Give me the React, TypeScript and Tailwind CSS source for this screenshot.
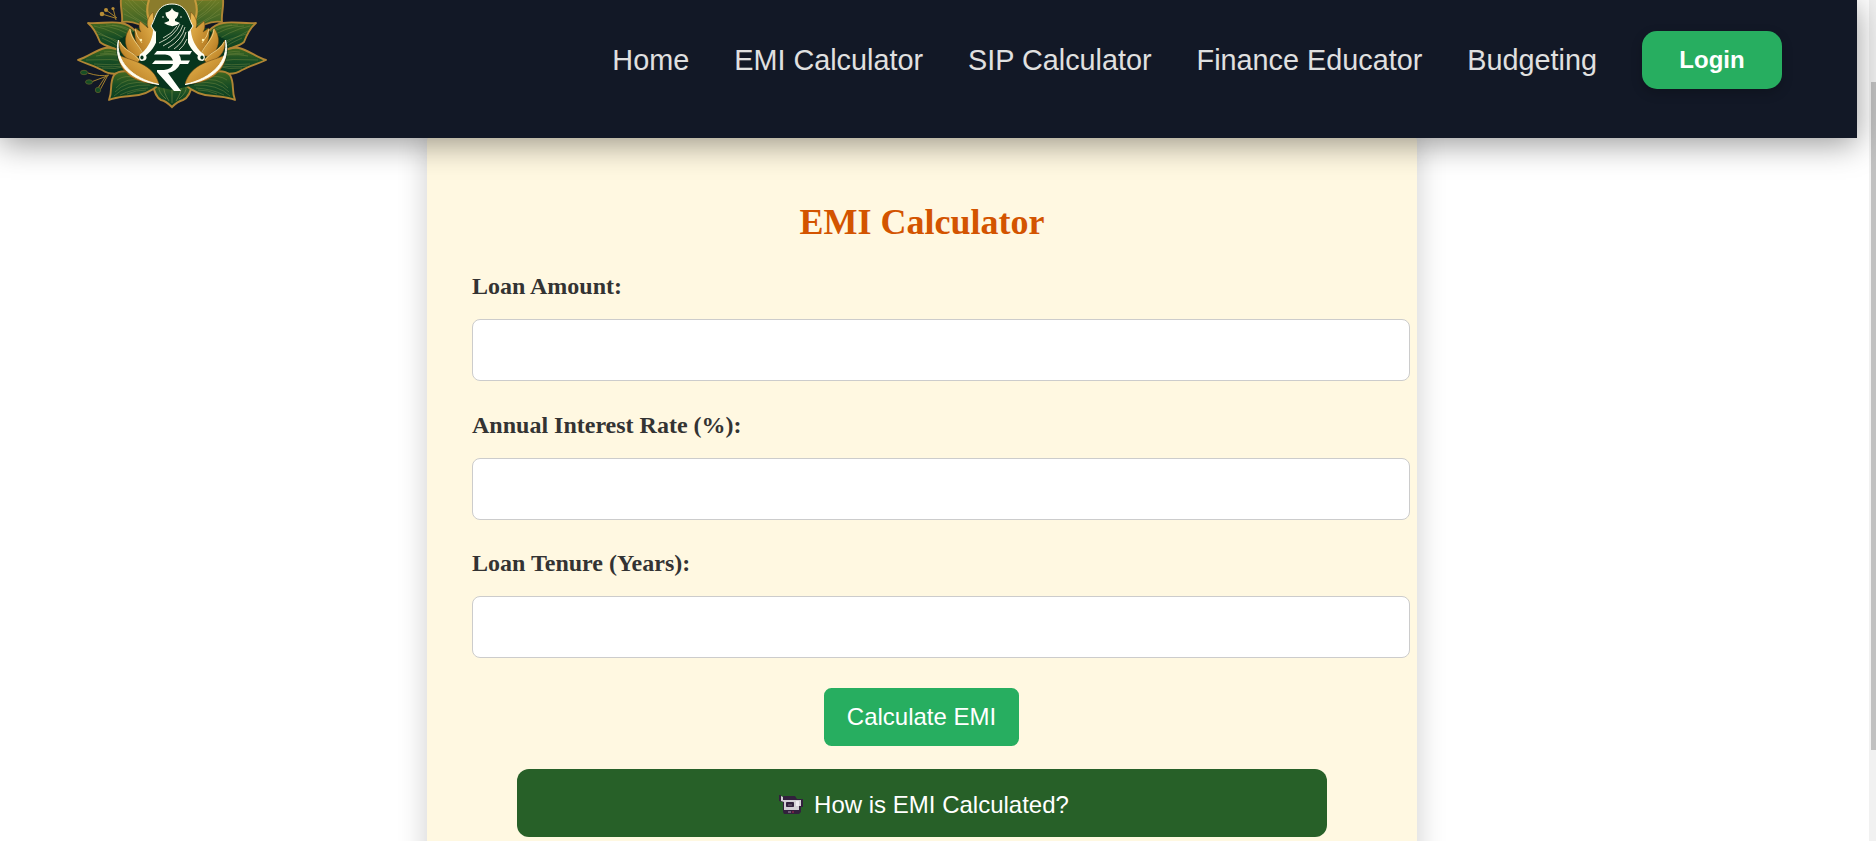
const NAV = ["Home", "EMI Calculator", "SIP Calculator", "Finance Educator", "Budgeting"];
const FIELDS = ["Loan Amount:", "Annual Interest Rate (%):", "Loan Tenure (Years):"];

// Right-hand leaves; the left side mirrors them around x = 112.
const SIDE_LEAVES = [
  { d: "M163 -1C164 7 161 14 162 22C150 20 139 26 132 34L116 0Z", v: "M159 2Q147 14 131 24M152 0Q143 10 129 18M161 8Q151 18 135 26M143 0Q137 8 125 14M156 0Q146 14 130 21M160 14Q150 18 138 26" },
  { d: "M196 23C184 24 174 21 163 23C152 25 144 34 141 46L161 52C172 47 180 46 184 42C187 34 190 28 196 23Z", v: "M190 26Q170 30 148 46M184 26Q166 26 146 40M188 31Q174 38 158 48M178 25Q162 25 148 35M182 38Q172 42 162 49M186 34Q170 38 154 47M172 25Q158 26 148 33" },
  { d: "M206 60C196 57 188 50 179 48C168 46 156 54 146 62C154 72 170 78 182 70C190 66 197 64 206 60Z", v: "M198 60Q174 58 148 62M188 56Q170 52 152 59M190 64Q172 66 152 63M180 52Q168 50 156 57M182 68Q170 70 156 66M184 54Q168 52 154 58M187 66Q172 68 154 65" },
  { d: "M175 100C171 90 175 84 170 75C162 67 146 72 124 84C133 92 144 96 154 96C162 97 168 97 175 100Z", v: "M170 96Q158 84 134 85M168 88Q158 76 140 81M164 95Q152 89 136 88M167 80Q158 74 148 78M169 92Q158 80 137 83M157 94Q148 90 138 90" },
];

function Half() {
  return (
    <>
      <path d="M128 28H148L158 40L140 50Z" fill="#183f20" />
      {SIDE_LEAVES.map((l, i) => (
        <g key={l.d}>
          <path d={l.d} fill={i === 0 ? "url(#leafTop)" : "url(#leaf)"} stroke="#b08534" strokeWidth="1.900" strokeLinejoin="round" />
          <path d={l.v} stroke="#8f9a4c" strokeWidth=".5" opacity=".7" />
        </g>
      ))}
      <path d="M166 40C173 62 158 82 112 90V30L140 26Z" fill="#07351d" />
    </>
  );
}

function HalfPetals() {
  return (
    <>
      <g fill="url(#gold)" stroke="#754b13" strokeWidth=".5">
        <path d="M131 12C136 17 138 22 136 28L144 21C146 27 144 30 143 32L149 28C150 40 147 48 139 55L132 46L130 24Z" />
        <path d="M154 28C161 37 160 49 150 57L141 55C143 46 151 41 154 28Z" />
        <path d="M165 40C166 53 158 60 147 63L144 60C149 53 159 51 165 40Z" />
      </g>
      <path d="M154 29C153 40 145 44 141 54M149 29Q148 36 142 43M164 42C160 51 150 52 145 60" stroke="#f6dc93" strokeWidth=".8" />
      <path d="M166 55C152 61 131 63 125 84C147 84 164 74 166 55Z" fill="url(#gold)" stroke="#6c4512" strokeWidth=".5" />
      <path d="M165.500 40C171 61 157 80 125 84.500C153 78 168.500 61 165.500 40Z" fill="#fffef2" stroke="#fffef2" strokeWidth=".9" />
      <path d="M125 23.500C129 24 130 27 131 31C132 40 135 46 142 53C145.500 54 146 60 142.500 61C138 61 136.500 58 138 55.500C131 50 127 43 124.500 32Z" fill="#fffef2" />
      <ellipse cx="142" cy="57.500" rx="1.600" ry="1.900" fill="#07351d" />
      <circle cx="143" cy="40" r="1.200" fill="#fff0af" />
    </>
  );
}

function Logo() {
  return (
    <svg viewBox="0 0 230 110" className="block h-[110px] w-[230px] overflow-hidden" fill="none" aria-hidden="true">
      <defs>
        <linearGradient id="leafTop" x1="0" y1="0" x2="0" y2="1">
          <stop offset="0" stopColor="#6d7b25" />
          <stop offset="1" stopColor="#285925" />
        </linearGradient>
        <linearGradient id="leaf" x1="0" y1="0" x2="0" y2="1">
          <stop offset="0" stopColor="#43691f" />
          <stop offset=".5" stopColor="#184d24" />
          <stop offset="1" stopColor="#0b3d20" />
        </linearGradient>
        <linearGradient id="gold" x1="0" y1="0" x2="1" y2="1">
          <stop offset="0" stopColor="#edbd56" />
          <stop offset="1" stopColor="#ae7119" />
        </linearGradient>
      </defs>
      <path d="M92 82C94 92 97 98 101 100C106 101 109 104 112 107C115 104 119 101 123 100C128 98 131 92 133 82Z" fill="url(#leaf)" stroke="#b08534" strokeWidth="2" />
      <path d="M112 103V84M106 99Q98 92 99 87M109 101Q103 92 104 86M119 99Q127 92 126 87M116 101Q122 92 121 86" stroke="#8c9650" strokeWidth=".5" />
      <Half />
      <g transform="translate(224 0) scale(-1 1)"><Half /></g>
      <path d="M88 0H136C139 12 138 22 130 30H94C86 22 85 12 88 0Z" fill="#8b7c2c" />
      <path d="M89 0Q84 14 93 27M135 0Q140 14 131 27" stroke="#c79b3c" strokeWidth="2" />
      <HalfPetals />
      <g transform="translate(224 0) scale(-1 1)"><HalfPetals /></g>
      <path d="M91 26C96 19 96 4 112 4C128 4 128 19 133 26L129 32H95Z" fill="#07351d" stroke="#fffef2" strokeWidth="1" />
      <path d="M99 25C104 22 109 24 109 20H115C115 24 120 22 125 25L128 32V49L112 60L96 49V32Z" fill="#07351d" />
      <path d="M109 17H115V21L120 23Q113 29.500 104 23L109 21Z" fill="#fffef2" />
      <path d="M105.500 12.500C109 12 111 10.500 112 8C113 10.500 115 12 118.500 12.500C118.500 17 115.500 20 112 20C108.500 20 105.500 17 105.500 12.500Z" fill="#fffef2" />
      <path d="M120 24Q115 36 99 43M123 25Q119 38 103 46M125 27Q122 40 108 48M126 32Q123 43 114 49M117 26Q112 34 103 38M127 39Q124 46 119 50" stroke="#f5f3df" strokeWidth=".8" />
      <circle cx="103" cy="17" r=".8" fill="#fffef2" /><circle cx="121" cy="17" r=".8" fill="#fffef2" />
      <path d="M97 51H132L130 54.500H119Q121 57 121 60.500H130L128 64H120Q117 71 108 73L121 91H114L97 72V70H104Q112 69 113 64H92L95 60.500H113Q111 54.500 105 54.500H94Z" fill="#fffffa" />
      <g stroke="#a5812e" strokeWidth="1">
        <path d="M42 14L55 18M46 10L57 18M53 8L56 20" />
        <path d="M28 73Q40 77 49 75M31 82L47 76M38 88L46 76M40 90L48 75" />
      </g>
      <g fill="#b78d36">
        <circle cx="42" cy="14" r="2.300" /><circle cx="46" cy="10" r="2" /><circle cx="53" cy="8.500" r="1.600" />
      </g>
      <g fill="#164e25" stroke="#5d5d2a" strokeWidth=".8">
        <ellipse cx="24" cy="72.500" rx="3.500" ry="2.200" /><ellipse cx="29" cy="82" rx="3.500" ry="2.200" /><circle cx="38" cy="90" r="2.700" />
      </g>
    </svg>
  );
}

function Camcorder() {
  return (
    <svg viewBox="0 0 24 19" className="h-[19px] w-6" aria-hidden="true">
      <path d="M0 0H2V2H4V1H16L18 4H24V12H22V17L20 19H5L4 17V7L0 6Z" fill="#32213d" />
      <path d="M2 1L4 2V5H22V11H20V15H5V7L2 6Z" fill="#d3d0d5" />
      <path d="M4 2H15L17 4V5H4Z" fill="#32213d" />
      <path d="M17 6H20V11H17Z" fill="#eeeaf0" />
      <rect x="7" y="7" width="8" height="5" rx=".8" fill="#32213d" />
      <rect x="9" y="9" width="4" height="2" fill="#55485d" />
      <path d="M9 17H12" stroke="#a79dad" /><path d="M13 17H15" stroke="#b72953" />
    </svg>
  );
}

export default function App() {
  return (
    <div className="flex h-[841px] w-[1876px] overflow-hidden bg-white font-['Liberation_Sans',Arial,sans-serif]">
      <div className="flex w-[1869px] shrink-0 flex-col">
        <header className="z-10 flex h-[138px] w-[1857px] shrink-0 items-start justify-between bg-[#121826] pr-[75px] pl-[60px] shadow-[0_6px_30px_rgba(0,0,0,0.4)]">
          <Logo />
          <nav className="mt-[31px] flex h-[58px] items-center gap-[45px] text-[28.8px] whitespace-nowrap text-[#e0e0e0]">
            {NAV.map((item) => <a key={item} className="pt-0.5">{item}</a>)}
            <button className="h-[58px] w-[140px] rounded-[15px] bg-[#27ae60] text-2xl font-bold text-white shadow-[0_4px_12px_rgba(0,0,0,0.2)]">Login</button>
          </nav>
        </header>
        <main className="-mt-2 ml-[427px] h-[760px] w-[990px] shrink-0 rounded-[12px] bg-[#fff8e1] px-[45px] pt-[72px] shadow-[0_0_30px_rgba(0,0,0,0.2)]">
          <h1 className="text-center font-['Liberation_Serif','Times_New_Roman',serif] text-4xl leading-[41px] font-bold text-[#d35400]">EMI Calculator</h1>
          <form className="mt-[30px] flex flex-col">
            {FIELDS.map((label) => (
              <label key={label} className="mb-[30.4px] block h-[108.2px] font-['Liberation_Serif','Times_New_Roman',serif] text-2xl leading-[27px] font-bold text-[#333]">
                {label}
                <input className="mt-[19.2px] block h-[62px] w-[938px] rounded-[8px] border border-[#ccc] bg-white px-[18px]" />
              </label>
            ))}
            <button type="button" className="-mt-px mr-px h-[58px] w-[195px] self-center rounded-[7.500px] bg-[#27ae60] text-2xl text-white">Calculate EMI</button>
            <button type="button" className="mt-[23px] flex h-[68px] w-[810px] items-center justify-center gap-[11px] self-center rounded-[12px] bg-[#276028] pt-1 pl-1 text-2xl text-white"><Camcorder />How is EMI Calculated?</button>
          </form>
        </main>
      </div>
      <div className="flex w-[7px] flex-col items-end bg-[#f1f1f1] pt-[82px]">
        <div className="h-[668px] w-[5px] bg-[#c1c1c1]" />
      </div>
    </div>
  );
}
